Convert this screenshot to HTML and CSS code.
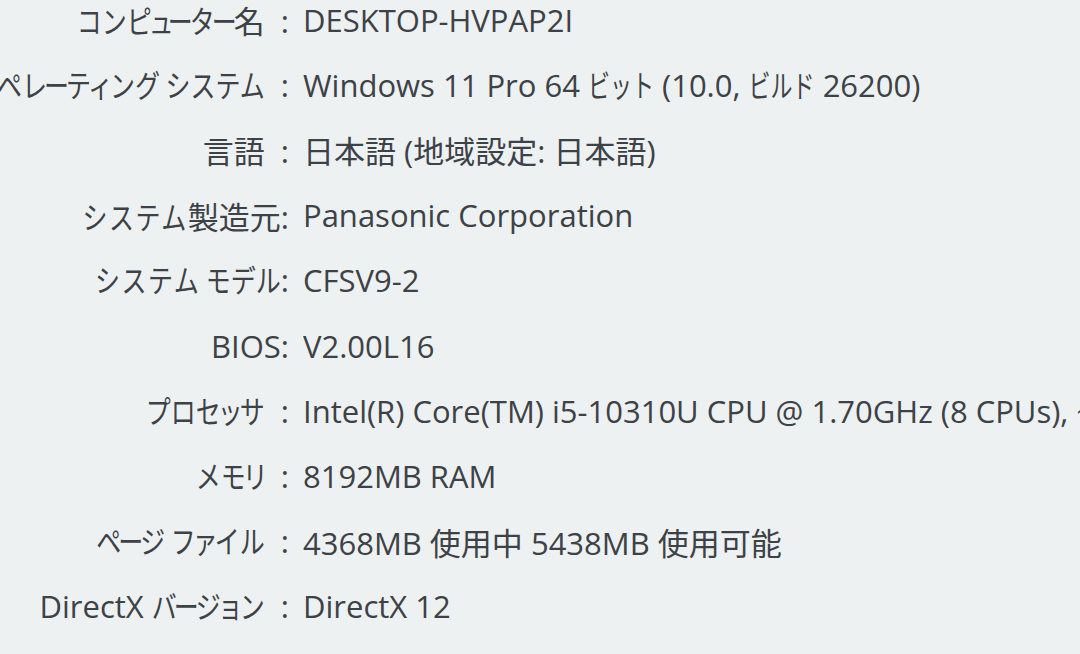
FILE: index.html
```html
<!DOCTYPE html>
<html lang="ja">
<head>
<meta charset="utf-8">
<title>システム情報</title>
<link rel="stylesheet" href="styles.css">
</head>
<body>
<div class="info">
  <div class="row"><div class="label"><span class="k">コンピ<span class="n">ュ</span><span class="n">ー</span>タ<span class="n">ー</span></span>名<span class="colon full">:</span></div><div class="value">DESKTOP-HVPAP2I</div></div>
  <div class="row"><div class="label"><span class="k">オペレ<span class="n">ー</span>テ<span class="n">ィ</span>ング システム</span><span class="colon full">:</span></div><div class="value">Windows 11 Pro 64 <span class="kv">ビット</span> (10.0, <span class="kv">ビルド</span> 26200)</div></div>
  <div class="row"><div class="label">言語<span class="colon full">:</span></div><div class="value">日本語 (地域設定: 日本語)</div></div>
  <div class="row"><div class="label"><span class="k"><span class="w">システム</span></span>製造元<span class="colon">:</span></div><div class="value">Panasonic Corporation</div></div>
  <div class="row"><div class="label"><span class="k"><span class="w">システム</span> モデル</span><span class="colon">:</span></div><div class="value">CFSV9-2</div></div>
  <div class="row"><div class="label">BIOS<span class="colon">:</span></div><div class="value">V2.00L16</div></div>
  <div class="row"><div class="label"><span class="k">プロセ<span class="n">ッ</span>サ</span><span class="colon full">:</span></div><div class="value">Intel(R) Core(TM) i5-10310U CPU @ 1.70GHz (8 CPUs), ~2.2GHz</div></div>
  <div class="row"><div class="label"><span class="k">メモ<span class="n">リ</span></span><span class="colon full">:</span></div><div class="value">8192MB RAM</div></div>
  <div class="row"><div class="label"><span class="k">ペ<span class="n">ー</span>ジ フ<span class="n">ァ</span>イル</span><span class="colon full">:</span></div><div class="value">4368MB 使用中 5438MB 使用可能</div></div>
  <div class="row"><div class="label">DirectX <span class="k">バ<span class="n">ー</span>ジ<span class="n">ョ</span>ン</span><span class="colon full">:</span></div><div class="value">DirectX 12</div></div>
</div>
</body>
</html>
```
FILE: styles.css
```css
html, body {
  margin: 0;
  padding: 0;
  background: #eef1f1;
  overflow: hidden;
}
body {
  width: 1080px;
  height: 654px;
  font-family: "Open Sans", "Noto Sans CJK JP", sans-serif;
  font-size: 31px;
  color: #3c4247;
}
.info {
  margin-top: -13px;
  display: flex;
  flex-direction: column;
}
.row {
  display: grid;
  grid-template-columns: 289px 1fr;
  column-gap: 14px;
  height: 65.2px;
  align-items: center;
  white-space: nowrap;
}
.label {
  display: flex;
  justify-content: flex-end;
  align-items: baseline;
  white-space: pre;
}
.value {
  overflow: hidden;
  white-space: pre;
}
/* Condensed kana, like the proportional UI font of the original */
.k,
.kv {
  display: inline-block;
  font-family: "Noto Sans CJK JP", sans-serif;
  line-height: 1;
  transform-origin: 50% 94%;
}
.k {
  font-size: 25px;
  transform: scaleY(1.24);
}
.kv {
  font-size: 22px;
  transform: scaleY(1.4);
}
.n {
  margin: 0 -3px;
}
.w {
  letter-spacing: 1.5px;
}
.colon {
  font-family: "Open Sans", sans-serif;
}
.colon.full {
  padding-left: 16px;
}
```
